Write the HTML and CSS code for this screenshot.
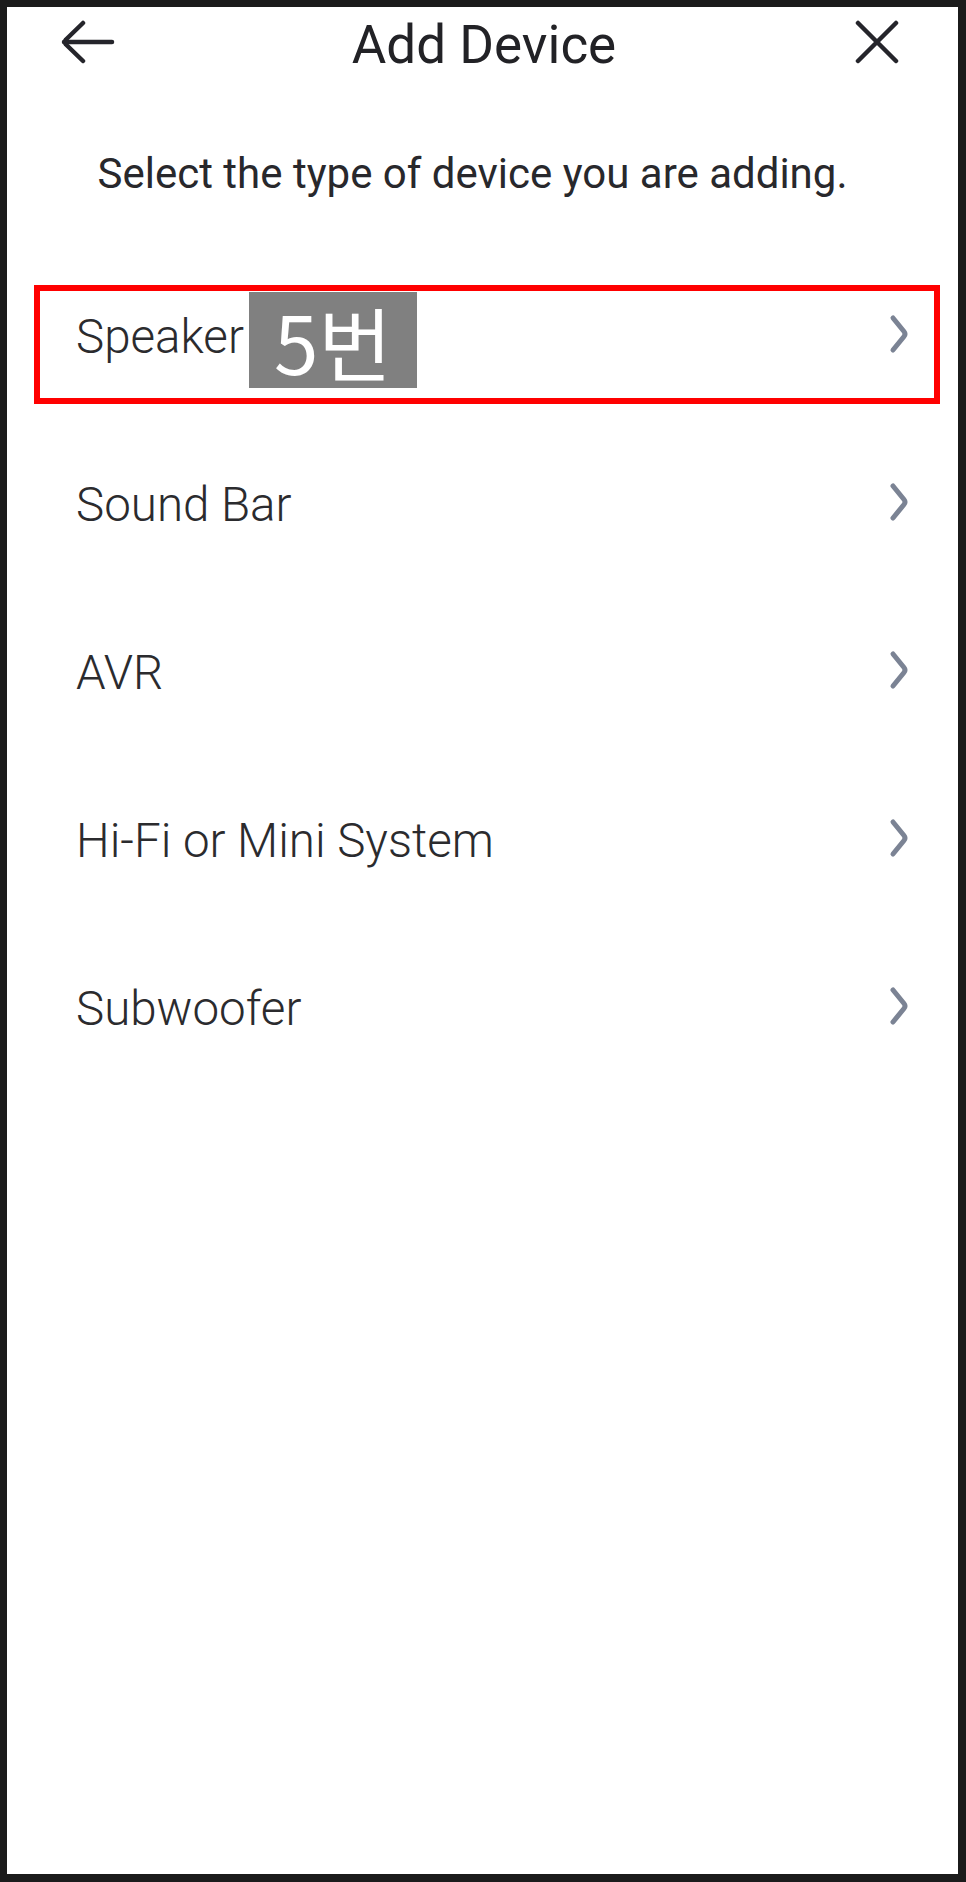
FILE: index.html
```html
<!DOCTYPE html>
<html lang="en">
<head>
    <meta charset="UTF-8">
    <meta name="viewport" content="width=device-width, initial-scale=1.0">
    <title>Add Device</title>
    <link rel="stylesheet" href="styles.css">
</head>
<body>
    <div id="screen">
        <div class="header">
            <button class="icon-btn back" aria-label="Back">
                <svg width="54" height="44" viewBox="0 0 54 44" fill="none" stroke="#25252b" stroke-width="4.5" stroke-linecap="round" stroke-linejoin="round">
                    <path d="M22 3 L5 19.5 Q3 22 5 24.5 L22 41" />
                    <path d="M3 22 H51" />
                </svg>
            </button>
            <h1>Add Device</h1>
            <button class="icon-btn close" aria-label="Close">
                <svg width="44" height="44" viewBox="0 0 44 44" fill="none" stroke="#25252b" stroke-width="4.5" stroke-linecap="round">
                    <path d="M3 3 L41 41 M41 3 L3 41" />
                </svg>
            </button>
        </div>

        <p class="intro">Select the type of device you are adding.</p>

        <ul class="device-list">
            <li class="device-row">
                <span class="label">Speaker</span>
                <span class="badge">5번</span>
                <svg class="chevron" width="22" height="40" viewBox="0 0 22 40" fill="none" stroke="#7b8394" stroke-width="5" stroke-linecap="round" stroke-linejoin="round">
                    <path d="M4 4 L15 17.5 Q17 20 15 22.5 L4 36" />
                </svg>
                <span class="highlight"></span>
            </li>
            <li class="device-row">
                <span class="label">Sound Bar</span>
                <svg class="chevron" width="22" height="40" viewBox="0 0 22 40" fill="none" stroke="#7b8394" stroke-width="5" stroke-linecap="round" stroke-linejoin="round">
                    <path d="M4 4 L15 17.5 Q17 20 15 22.5 L4 36" />
                </svg>
            </li>
            <li class="device-row">
                <span class="label">AVR</span>
                <svg class="chevron" width="22" height="40" viewBox="0 0 22 40" fill="none" stroke="#7b8394" stroke-width="5" stroke-linecap="round" stroke-linejoin="round">
                    <path d="M4 4 L15 17.5 Q17 20 15 22.5 L4 36" />
                </svg>
            </li>
            <li class="device-row">
                <span class="label">Hi-Fi or Mini System</span>
                <svg class="chevron" width="22" height="40" viewBox="0 0 22 40" fill="none" stroke="#7b8394" stroke-width="5" stroke-linecap="round" stroke-linejoin="round">
                    <path d="M4 4 L15 17.5 Q17 20 15 22.5 L4 36" />
                </svg>
            </li>
            <li class="device-row">
                <span class="label">Subwoofer</span>
                <svg class="chevron" width="22" height="40" viewBox="0 0 22 40" fill="none" stroke="#7b8394" stroke-width="5" stroke-linecap="round" stroke-linejoin="round">
                    <path d="M4 4 L15 17.5 Q17 20 15 22.5 L4 36" />
                </svg>
            </li>
        </ul>
    </div>
</body>
</html>
```

FILE: styles.css
```css
html, body {
    margin: 0;
    height: 100%;
}

body {
    background: #1b1b1b;
    padding: 7px 8px 8px 7px;
    box-sizing: border-box;
    font-family: Roboto, "Noto Sans", Arial, sans-serif;
}

#screen {
    background: #ffffff;
    height: 100%;
    overflow: hidden;
}

.header {
    display: grid;
    grid-template-columns: 1fr auto 1fr;
    align-items: center;
    height: 70px;
    padding: 3px 59px 0 54px;
}

.icon-btn {
    background: none;
    border: none;
    padding: 0;
    margin-bottom: 6px;
    display: flex;
    cursor: pointer;
}

.close {
    justify-self: end;
}

h1 {
    margin: 0 0 0 8px;
    font-size: 53px;
    font-weight: 400;
    line-height: 70px;
    color: #222226;
}

.intro {
    margin: 66px 0 0;
    text-align: center;
    font-size: 42px;
    line-height: 56px;
    color: #28282c;
    padding-right: 20px;
}

.device-list {
    list-style: none;
    margin: 51px 0 0;
    padding: 0;
}

.device-row {
    position: relative;
    display: flex;
    align-items: center;
    height: 168px;
    padding: 0 47px 0 69px;
}

.label {
    font-size: 47.5px;
    font-weight: 300;
    line-height: 1.2;
    color: #2b2b2e;
}

.badge {
    margin: 5px 0 0 5px;
    background: #808080;
    color: #ffffff;
    font-family: "Noto Sans CJK KR", "Noto Sans", sans-serif;
    font-size: 80px;
    line-height: 96px;
    padding: 0 25px 0 25px;
}

.chevron {
    margin-left: auto;
    margin-top: -6px;
}

/* annotation box drawn over the first row */
.highlight {
    position: absolute;
    left: 27px;
    top: 32px;
    width: 894px;
    height: 107px;
    border: 6px solid #ff0000;
}
```
